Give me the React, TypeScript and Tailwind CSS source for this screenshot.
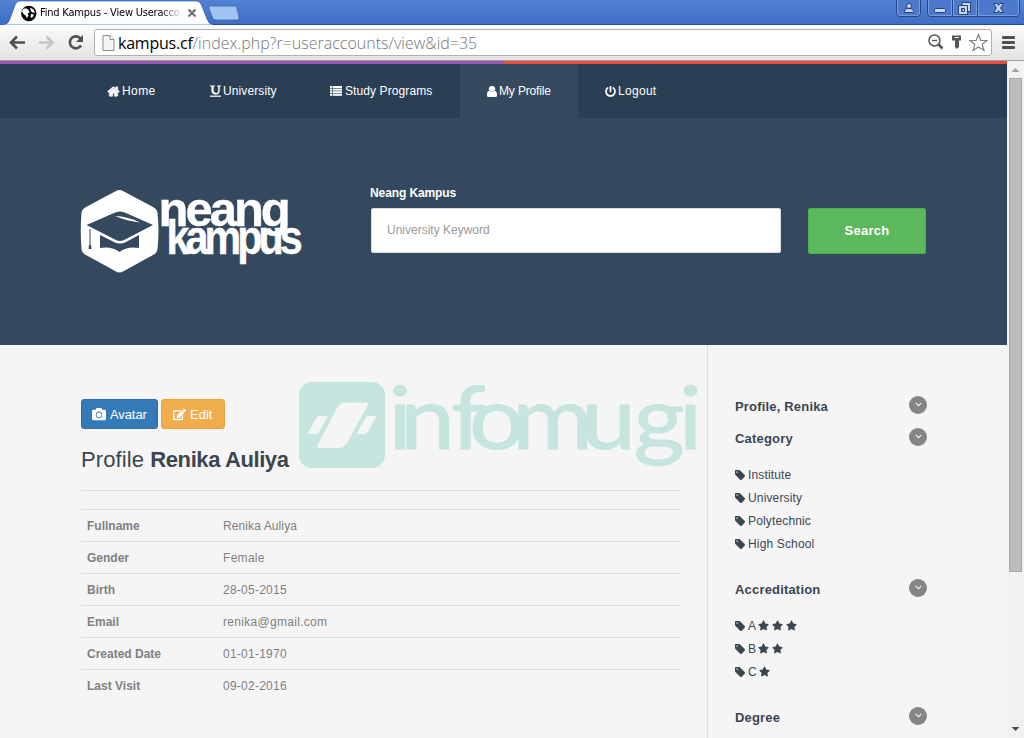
import React from "react";
import { FaPowerOff, FaCamera, FaEdit, FaStar, FaChevronDown } from "react-icons/fa";

function HomeIcon() {
  return (
    <svg viewBox="0 0 1792 1792" className="h-[13px] w-[13px] shrink-0" fill="currentColor" stroke="currentColor" strokeWidth="90">
      <path d="M1472 992v480q0 26-19 45t-45 19h-384v-384h-256v384h-384q-26 0-45-19t-19-45v-480q0-1 .5-3t.5-3l575-474 575 474q1 2 1 6zm223-69l-62 74q-8 9-21 11h-3q-13 0-21-7l-692-577-692 577q-12 8-24 7-13-2-21-11l-62-74q-8-10-7-23.5t11-21.5l719-599q32-26 76-26t76 26l244 204v-195q0-14 9-23t23-9h192q14 0 23 9t9 23v408l219 182q10 8 11 21.5t-7 23.5z" />
    </svg>
  );
}

function UnderlineIcon() {
  return (
    <svg viewBox="0 0 11 12" className="h-[12px] w-[11px] shrink-0" fill="none" stroke="currentColor">
      <path d="M0 1H5M7 1H11" strokeWidth="1" />
      <path d="M2.500 1V5.500Q2.500 8.500 5.500 8.500" strokeWidth="2.200" />
      <path d="M5 8.700Q9 9 9 5.500V1" strokeWidth="1.500" />
      <path d="M0 11.200H11" strokeWidth="1.200" />
    </svg>
  );
}

function TagIcon() {
  return (
    <svg viewBox="128 128 1515 1515" className="mr-[3px] h-[10px] w-[10px] shrink-0" fill="currentColor" stroke="currentColor" strokeWidth="50">
      <path d="M576 448q0-53-37.500-90.500t-90.500-37.500-90.500 37.500-37.500 90.500 37.500 90.500 90.500 37.500 90.500-37.500 37.500-90.500zm1067 576q0 53-37 90l-491 492q-39 37-91 37-53 0-90-37l-715-716q-38-37-64.500-101t-26.500-117v-416q0-52 38-90t90-38h416q53 0 117 26.500t102 64.500l715 714q37 39 37 91z" />
    </svg>
  );
}

function UserIcon() {
  return (
    <svg viewBox="256 128 1280 1536" className="h-[11px] w-[10px] shrink-0" fill="currentColor" stroke="currentColor" strokeWidth="60" preserveAspectRatio="none">
      <path d="M1536 1399q0 109-62.5 187t-150.5 78h-854q-88 0-150.5-78t-62.5-187q0-85 8.5-160.5t31.5-152 58.5-131 94-89 134.5-34.5q131 128 313 128t313-128q76 0 134.5 34.5t94 89 58.5 131 31.5 152 8.5 160.5zm-256-887q0 159-112.5 271.5t-271.5 112.5-271.5-112.5-112.5-271.5 112.5-271.5 271.5-112.5 271.5 112.5 112.5 271.5z" />
    </svg>
  );
}

function ListIcon() {
  return (
    <svg viewBox="0 0 12 10" className="h-[10px] w-[12px] shrink-0" fill="currentColor">
      {[0, 2.6, 5.2, 7.8].map((y) => (
        <g key={y}>
          <rect x="0" y={y} width="2.2" height="2" />
          <rect x="2.8" y={y} width="9.2" height="2" />
        </g>
      ))}
    </svg>
  );
}

function TabStrip() {
  return (
    <div className="relative h-[25px] bg-linear-to-b from-[#5282d3] to-[#3f6cc6]">
      <svg className="absolute inset-0" width="1024" height="25" viewBox="0 0 1024 25">
        <defs>
          <linearGradient id="tab" x1="0" y1="0" x2="0" y2="1">
            <stop offset="0" stopColor="#fff" />
            <stop offset="1" stopColor="#fbfbfb" />
          </linearGradient>
        </defs>
        <path d="M0 24.5H1024" stroke="#284a91" />
        <path d="M0 25V24.5H4Q8 24 9.500 20L15 5Q16.500 1 20 1H196Q200 1 201.500 5L207 19Q209 24.500 213 24.500V25Z" fill="url(#tab)" stroke="#315ba9" strokeWidth=".7" />
        <path d="M209.500 6H234Q236 6 236.700 7.500L239 17Q239.500 20 237 20H216Q213.500 20 212.500 17.500L209 8.500Q208.200 6 209.500 6Z" fill="#9fc4f2" stroke="#4067a9" strokeWidth=".8" />
        <circle cx="28.800" cy="13.500" r="7.700" fill="#050505" />
        <path d="M23 9L26 8.200L28 9.500L29.500 12L27.500 14L28.600 15.500L27 18L25.500 15.500L23.500 14L22 11.500ZM30 7.500L33.500 9.500L35 12.500L32 12.500L30.700 10.500ZM31 14L34 14.500L32 18L30.500 17Z" fill="#fff" />
        <path d="M188.500 9.500L195.500 16.500M195.500 9.500L188.500 16.500" stroke="#6a6a6a" strokeWidth="1.900" />
        <g fill="#4c79cc" stroke="#264684" strokeWidth="1">
          <path d="M896.500 -2V13Q896.500 16.500 900 16.500H917Q920.500 16.500 920.500 13V-2" />
          <path d="M927.500 -2V13Q927.500 16.500 931 16.500H1016Q1019.500 16.500 1019.500 13V-2M952.500 0V16M977.500 0V16" />
        </g>
        <path d="M897.500 0V13Q897.500 15.500 900 15.500H917Q919.500 15.500 919.500 13V0M928.500 0V13Q928.500 15.500 931 15.500H951.500V0M953.500 0V15.500H976.500V0M978.500 0V15.500H1016Q1018.500 15.500 1018.500 13V0" fill="none" stroke="#81a5e4" strokeWidth=".8" />
        <g fill="#c5d7f5" stroke="#263f75" strokeWidth="1">
          <circle cx="909" cy="6" r="2.500" />
          <path d="M904.500 12.500V10.500L907 8.500H911L913.500 10.500V12.500Z" />
          <rect x="934.500" y="8.500" width="11" height="4" rx="1" />
          <path d="M962 2.500H970.500V11.500H962Z" />
          <path d="M958.500 5.500H967.500V14.500H958.500ZM961.500 8.500V11.500H964.500V8.500Z" fillRule="evenodd" />
          <path d="M993.500 3.500H997L998.500 5.500L1000 3.500H1003.500L1000.500 8L1003.500 12.500H1000L998.500 10.500L997 12.500H993.500L996.500 8Z" />
        </g>
      </svg>
      <div className="relative flex h-[25px] items-center pl-[40px] pt-[2px]">
        <span className="w-[142px] overflow-hidden whitespace-nowrap font-['DejaVu_Sans_Condensed','DejaVu_Sans',sans-serif] text-[11px] tracking-[-0.2px] text-black [mask-image:linear-gradient(to_right,black_85%,transparent)]">Find Kampus - View Useracco</span>
      </div>
    </div>
  );
}

function Toolbar() {
  return (
    <div className="flex h-[36px] items-center border-b border-[#a0a0a0] bg-linear-to-b from-[#fbfbfb] to-[#e3e3e3] pl-[9px]">
      <svg width="85" height="24" viewBox="9 31 85 24" fill="none" className="shrink-0">
        <path d="M11 42.500H25M17 36.500L11 42.500L17 48.500" stroke="#505050" strokeWidth="2.600" />
        <path d="M39 42.500H52M46.500 36.500L52.500 42.500L46.500 48.500" stroke="#c5c5c5" strokeWidth="2.600" />
        <path d="M80.500 38.500A6 6 0 1 0 81 45.500" stroke="#505050" strokeWidth="2.600" />
        <path d="M83 35V42H76Z" fill="#505050" />
      </svg>
      <div className="flex h-[27px] w-[898px] shrink-0 items-center rounded-[3px] border border-[#b0b0b0] bg-white pl-[7px]">
        <svg width="13" height="16" viewBox="0 0 13 16" className="shrink-0">
          <path d="M1 .5H8L12 4.500V15.500H1Z" fill="#f5f5f5" stroke="#8c8c8c" />
          <path d="M8 .5V4.500H12" fill="#fff" stroke="#8c8c8c" />
        </svg>
        <span className="ml-[3px] w-[808px] whitespace-nowrap font-['Open_Sans','Noto_Sans',sans-serif] text-[16px] font-light leading-[20px] text-[#777]">
          <span className="font-normal tracking-[-0.22px] text-black">kampus.cf</span>/index.php?r=useraccounts/view&amp;id=35
        </span>
        <svg width="62" height="20" viewBox="926 33 62 20" fill="none" className="shrink-0">
          <circle cx="934.500" cy="40.500" r="5.500" stroke="#555" strokeWidth="1.500" />
          <path d="M932 40.500H937" stroke="#555" strokeWidth="1.300" />
          <path d="M938.500 44.500L942.500 48.500" stroke="#555" strokeWidth="2.500" />
          <path d="M952 35.500H961V40.500H959V47L956.500 49L955 47V40.500H952Z" fill="#555" />
          <path d="M954.500 37.500H959" stroke="#eee" strokeWidth="1" />
          <path d="M978.500 34.500L980.800 40.300L987 40.500L982.200 44.300L984 50.500L978.500 47L973 50.500L974.800 44.300L970 40.500L976.200 40.300Z" stroke="#808080" strokeWidth="1.200" />
        </svg>
      </div>
      <div className="ml-[10px] flex w-[13px] flex-col gap-[2px]">
        <i className="h-[3px] rounded-[1px] bg-[#505050]" />
        <i className="h-[3px] rounded-[1px] bg-[#505050]" />
        <i className="h-[3px] rounded-[1px] bg-[#505050]" />
      </div>
    </div>
  );
}

function Nav() {
  const item = "flex h-full shrink-0 items-center whitespace-nowrap";
  return (
    <nav className="flex h-[54px] bg-[#2b3f54] pl-[81px] text-[12px] tracking-[0.1px] text-white">
      <a className={`${item} w-[102px] gap-[2px] pl-[26px] tracking-[0.4px]`}><HomeIcon /><span>Home</span></a>
      <a className={`${item} w-[120px] gap-[2px] pl-[27px]`}><UnderlineIcon /><span>University</span></a>
      <a className={`${item} w-[157px] gap-[3px] pl-[27px]`}><ListIcon /><span>Study Programs</span></a>
      <a className={`${item} w-[118px] gap-[2px] bg-[#34495e] pl-[27px]`}><UserIcon /><span className="tracking-[-0.15px]">My Profile</span></a>
      <a className={`${item} gap-[2px] pl-[27px]`}><FaPowerOff className="h-[11px] w-[11px]" /><span className="tracking-[0.3px]">Logout</span></a>
    </nav>
  );
}

function Logo() {
  return (
    <svg width="222" height="84" viewBox="80 190 222 84" className="mt-[72px] shrink-0 overflow-visible">
      <path d="M116 191Q119.500 189 123 191L153 207Q157 209 157.500 213Q159.500 231 157.500 249Q157 253 153 255L123 271.500Q119.500 273.500 116 271.500L86 255Q82 253 81.500 249Q80 231 81.500 213Q82 209 86 207Z" fill="#fff" />
      <path d="M86.500 225L114 213Q120 210 126 213L153 225L126 239Q120 243 114 239Z" fill="#34495e" />
      <path d="M100 235L114 242Q120 245 126 242L139 235V248Q127 246 119.500 252Q112 246 100 248Z" fill="#34495e" />
      <path d="M115 216Q128 216.500 140 222.500Q127 221 115 216Z" fill="#fff" />
      <path d="M90 229V245" stroke="#34495e" strokeWidth="1" />
      <path d="M88.500 249L89 245H91L91.500 249Z" fill="#34495e" />
      <g fill="#fff" stroke="#fff" strokeWidth=".4" fontFamily="'Liberation Sans', sans-serif" fontWeight="700">
        <text x="158.500" y="225.500" fontSize="49" letterSpacing="-3">neang</text>
        <text transform="translate(166.500 254) scale(.86 1)" x="0" y="0" fontSize="48" letterSpacing="-4.600">kampus</text>
      </g>
    </svg>
  );
}

function Hero() {
  return (
    <section className="flex h-[227px] bg-[#34495e] pl-[80px]">
      <Logo />
      <div className="ml-[68px] w-[411px] shrink-0 pt-[66px]">
        <label className="block h-[24px] text-[12px] font-bold leading-[18px] tracking-[-0.1px] text-white">Neang Kampus</label>
        <div className="ml-px flex h-[45px] items-center rounded-[2px] border border-[#ddd] bg-white px-[15px] pb-px text-[12px] text-[#999]">University Keyword</div>
      </div>
      <button className="ml-[27px] mt-[90px] h-[46px] w-[118px] shrink-0 rounded-[2px] border border-[#4cae4c] bg-[#5cb85c] text-[13px] font-bold tracking-[0.3px] text-white">Search</button>
    </section>
  );
}

const rows = [
  ["Fullname", "Renika Auliya", "tracking-[0.1px]"],
  ["Gender", "Female", "tracking-[0.3px]"],
  ["Birth", "28-05-2015", "tracking-[0.25px]"],
  ["Email", "renika@gmail.com", "tracking-[0.3px]"],
  ["Created Date", "01-01-1970", "tracking-[0.25px]"],
  ["Last Visit", "09-02-2016", "tracking-[0.25px]"],
];

function Profile() {
  return (
    <main className="w-[707px] shrink-0 pl-[81px] pr-[27px] pt-[54px]">
      <div className="flex gap-[3px] text-[13px] text-white">
        <button className="flex h-[30px] w-[77px] items-center gap-[4px] rounded-[3px] border border-[#2e6da4] bg-[#337ab7] pl-[10px]"><FaCamera className="h-[14px] w-[14px]" /><span className="pt-px tracking-[-0.1px]">Avatar</span></button>
        <button className="flex h-[30px] w-[64px] items-center gap-[4px] rounded-[3px] border border-[#eea236] bg-[#f0ad4e] pl-[11px]"><FaEdit className="h-[13px] w-[13px]" /><span className="pt-px">Edit</span></button>
      </div>
      <h1 className="mt-[16px] h-[46px] whitespace-nowrap border-b border-[#ddd] text-[22px] leading-[30px] tracking-[-0.3px] text-[#3b4650]"><span className="tracking-[0.1px]">Profile </span><b className="tracking-[-0.4px]">Renika Auliya</b></h1>
      <dl className="mt-[18px] text-[12px]">
        {rows.map(([name, value, tracking]) => (
          <div key={name} className="flex h-[32px] items-center border-t border-[#ddd] pl-[6px] text-[#808080]">
            <dt className="w-[136px] font-bold">{name}</dt>
            <dd className={tracking}>{value}</dd>
          </div>
        ))}
      </dl>
    </main>
  );
}

function Heading({ children }: { children: React.ReactNode }) {
  return (
    <h2 className="flex h-[32px] items-center justify-between text-[13px] font-bold tracking-[0.18px] text-[#3b4650]">
      <span className="pt-[2px]">{children}</span>
      <span className="mb-[3px] flex h-[18px] w-[18px] items-center justify-center rounded-full bg-[#858585] text-white"><FaChevronDown className="h-[7px] w-[7px]" /></span>
    </h2>
  );
}

function Tag({ label, stars = 0 }: { label: string; stars?: number }) {
  return (
    <li className="flex h-[23px] items-center text-[12px] tracking-[0.15px]">
      <TagIcon />
      {label}
      <span className="ml-[2px] flex gap-[3px]">
        {Array.from({ length: stars }, (_, i) => <FaStar key={i} className="h-[11px] w-[11px]" />)}
      </span>
    </li>
  );
}

function Sidebar() {
  return (
    <aside className="w-[300px] border-l border-[#ddd] pl-[27px] pr-[80px] pt-[45px] text-[#3b4650]">
      <Heading>Profile, Renika</Heading>
      <Heading>Category</Heading>
      <ul className="pb-[18px] pt-[9px]">
        <Tag label="Institute" /><Tag label="University" /><Tag label="Polytechnic" /><Tag label="High School" />
      </ul>
      <Heading>Accreditation</Heading>
      <ul className="pb-[18px] pt-[9px]">
        <Tag label="A" stars={3} /><Tag label="B" stars={2} /><Tag label="C" stars={1} />
      </ul>
      <Heading>Degree</Heading>
    </aside>
  );
}

function Watermark() {
  return (
    <svg className="pointer-events-none absolute left-[298px] top-[320px] overflow-visible" width="404" height="90" viewBox="298 381 404 90" fill="#c6e5df">
      <rect x="299" y="382" width="86" height="86" rx="13" />
      <g fill="#f5f5f5">
        <path d="M346 402.500H366Q369 402.500 367.500 405.500L347 443Q344 448 339 448H318.500Q316 448 317.500 445L337 408Q340 402.500 346 402.500Z" />
        <path d="M319 416H328L318 434H308Q307.500 434 308.500 432L315.500 419Q317 416 319 416ZM367 416H375Q377 416 375.500 418L368.500 431Q367 434 364 434H356Z" />
      </g>
      <text transform="scale(1.12 1)" x="346.7 357.1 402.7 418.8 457.1 518.8 565.6 606" y="448.700" fontSize="88" fontFamily="Lato, sans-serif" fontWeight="400" stroke="#c6e5df" strokeWidth="1">infomugi</text>
    </svg>
  );
}

function Scrollbar() {
  return (
    <div className="flex h-[677px] w-[17px] shrink-0 flex-col items-center bg-[#f1f1f1]">
      <svg width="17" height="17" className="shrink-0"><path d="M4.500 11L8.500 7L12.500 11Z" fill="#a3a3a3" /></svg>
      <div className="h-[494px] w-[13px] shrink-0 border border-[#a8a8a8] bg-[#bcbcbc]" />
      <svg width="17" height="17" className="mt-auto shrink-0"><path d="M4.500 6L8.500 10L12.500 6Z" fill="#505050" /></svg>
    </div>
  );
}

export default function App() {
  return (
    <div className="h-[738px] w-[1024px] overflow-hidden bg-[#f5f5f5] font-['Liberation_Sans',Arial,sans-serif]">
      <TabStrip />
      <Toolbar />
      <div className="relative flex h-[677px]">
        <div className="w-[1007px] shrink-0">
          <div className="flex h-[3px] bg-[#e74c3c]"><div className="w-[504px] bg-[#9b59b6]" /></div>
          <Nav />
          <Hero />
          <div className="flex h-[393px] overflow-hidden"><Profile /><Sidebar /></div>
        </div>
        <Scrollbar />
        <Watermark />
      </div>
    </div>
  );
}
